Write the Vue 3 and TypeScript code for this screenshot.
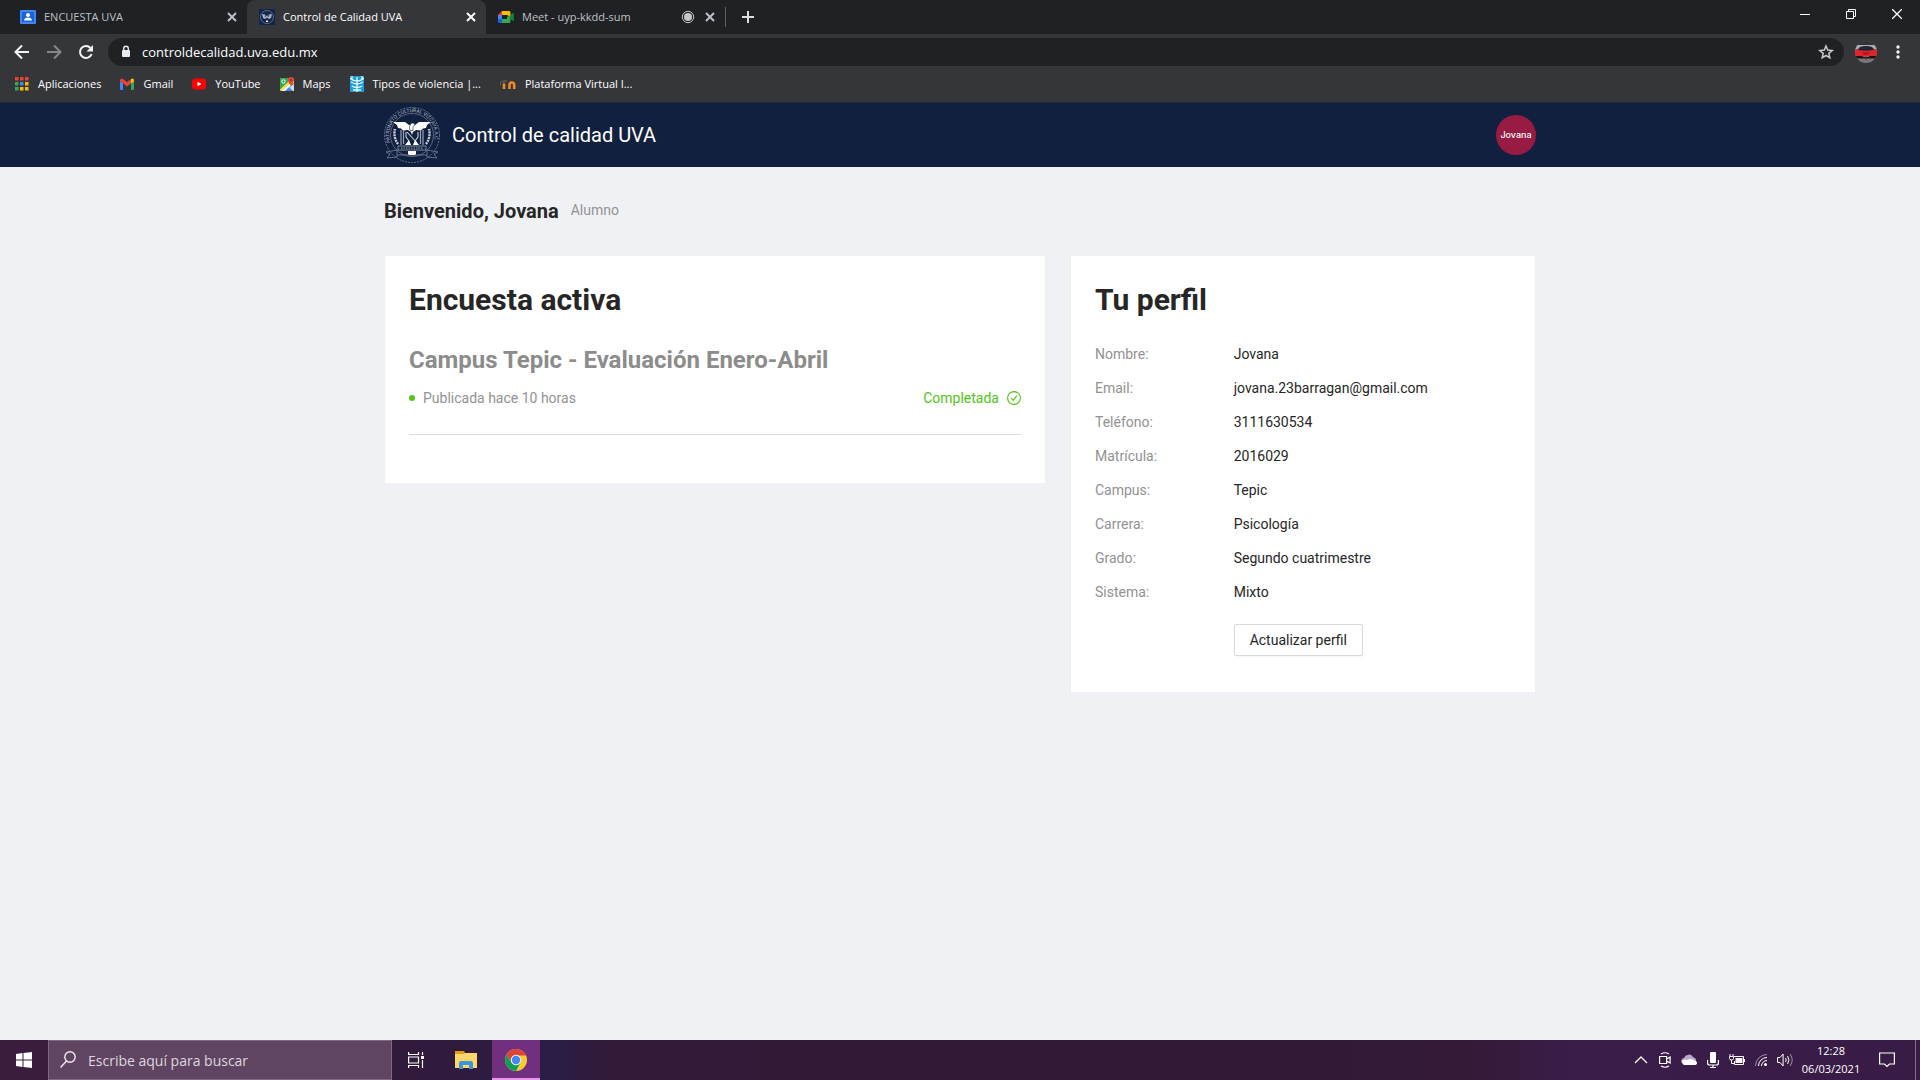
<script setup lang="ts">
import { ref } from 'vue'

interface ProfileField {
  label: string
  value: string
}

const address = ref('controldecalidad.uva.edu.mx')
const search = ref('')

const profile: ProfileField[] = [
  { label: 'Nombre', value: 'Jovana' },
  { label: 'Email', value: 'jovana.23barragan@gmail.com' },
  { label: 'Teléfono', value: '3111630534' },
  { label: 'Matrícula', value: '2016029' },
  { label: 'Campus', value: 'Tepic' },
  { label: 'Carrera', value: 'Psicología' },
  { label: 'Grado', value: 'Segundo cuatrimestre' },
  { label: 'Sistema', value: 'Mixto' },
]

const appColors: string[] = [
  '#ea4335', '#ea4335', '#ea4335',
  '#34a853', '#4285f4', '#fbbc04',
  '#34a853', '#fbbc04', '#fbbc04',
]
</script>

<template>
  <div class="desktop">
    <header class="browser">
      <div class="tab-strip">
        <div class="tab">
          <button class="tab-title" type="button">
            <svg width="16" height="16" viewBox="0 0 16 16" aria-hidden="true">
              <rect y="1" width="16" height="14" rx="1" fill="#4285f4" />
              <rect x="2" y="3" width="12" height="10" fill="#1a62d6" />
              <circle cx="8" cy="6" r="2" fill="#fff" />
              <path d="M4 11.500c0-2 2-3 4-3s4 1 4 3z" fill="#fff" />
            </svg>
            <span>ENCUESTA UVA</span>
          </button>
          <button class="tab-close" type="button" aria-label="Cerrar pestaña">
            <svg width="10" height="10" viewBox="0 0 10 10"><path d="M1 1l8 8M9 1l-8 8" /></svg>
          </button>
        </div>
        <div class="tab active">
          <button class="tab-title" type="button">
            <svg width="16" height="16" viewBox="0 0 16 16" aria-hidden="true">
              <rect width="16" height="16" fill="#14254a" />
              <circle cx="8" cy="8" r="6.500" fill="none" stroke="#6f7c98" stroke-width=".8" />
              <path d="M3 5l3 .5L8 7l2-1.500L13 5l-1 4-2 1-2-1.500L6 10 4 9z" fill="#aab4c6" />
              <circle cx="6.500" cy="7" r=".8" fill="#14254a" /><circle cx="9.500" cy="7" r=".8" fill="#14254a" />
              <path d="M7 11.500h2v1.500H7z" fill="#fff" />
            </svg>
            <span>Control de Calidad UVA</span>
          </button>
          <button class="tab-close" type="button" aria-label="Cerrar pestaña">
            <svg width="10" height="10" viewBox="0 0 10 10"><path d="M1 1l8 8M9 1l-8 8" /></svg>
          </button>
        </div>
        <div class="tab">
          <button class="tab-title" type="button">
            <svg width="16" height="16" viewBox="0 0 16 16" aria-hidden="true">
              <path d="M4 2v4H0z" fill="#ea4335" />
              <path d="M4 2h7q1.500 0 1.500 1.500V8L9 6H4z" fill="#fbbc04" />
              <path d="M0 6h4v4H0z" fill="#4285f4" />
              <path d="M0 10h4v4H1.500Q0 14 0 12.500z" fill="#1967d2" />
              <path d="M4 10h5V8l3.500-2v6.500q0 1.500-1.500 1.500H4z" fill="#34a853" />
              <path d="M12.500 6L15 4q.8-.5.8.4v7.200q0 .9-.8.4l-2.500-2z" fill="#188038" />
            </svg>
            <span>Meet - uyp-kkdd-sum</span>
          </button>
          <svg width="14" height="14" viewBox="0 0 14 14" aria-hidden="true">
            <circle cx="7" cy="7" r="4" fill="#c4c7ca" />
            <circle cx="7" cy="7" r="5.700" fill="none" stroke="#c4c7ca" />
          </svg>
          <button class="tab-close" type="button" aria-label="Cerrar pestaña">
            <svg width="10" height="10" viewBox="0 0 10 10"><path d="M1 1l8 8M9 1l-8 8" /></svg>
          </button>
        </div>
        <span class="tab-divider"></span>
        <button class="new-tab" type="button" aria-label="Nueva pestaña">
          <svg width="12" height="12" viewBox="0 0 12 12"><path d="M6 0v12M0 6h12" stroke="#dadce0" stroke-width="2" /></svg>
        </button>
        <div class="window-controls">
          <button type="button" aria-label="Minimizar">
            <svg width="10" height="10" viewBox="0 0 10 10"><path d="M0 5.500h10" /></svg>
          </button>
          <button type="button" aria-label="Restaurar">
            <svg width="10" height="10" viewBox="0 0 10 10"><path d="M.5 2.500h7v7h-7zM2.500 2.500v-2h7v7h-2" /></svg>
          </button>
          <button type="button" aria-label="Cerrar">
            <svg width="10" height="10" viewBox="0 0 10 10"><path d="M0 0l10 10M10 0L0 10" stroke-width="1.300" /></svg>
          </button>
        </div>
      </div>

      <div class="toolbar">
        <button class="nav-button" type="button" aria-label="Atrás">
          <svg width="16" height="16" viewBox="0 0 16 16"><path d="M15 8H2M8 1.500L1.500 8 8 14.500" fill="none" stroke="#f1f3f4" stroke-width="2" /></svg>
        </button>
        <button class="nav-button" type="button" aria-label="Adelante">
          <svg width="16" height="16" viewBox="0 0 16 16"><path d="M1 8h13M8 1.500L14.500 8 8 14.500" fill="none" stroke="#85878a" stroke-width="2" /></svg>
        </button>
        <button class="nav-button" type="button" aria-label="Recargar">
          <svg width="16" height="16" viewBox="0 0 16 16">
            <path d="M13.600 10.200A6 6 0 1 1 12.500 4" fill="none" stroke="#f1f3f4" stroke-width="2" />
            <path d="M15 1v6.500H8.500z" fill="#f1f3f4" />
          </svg>
        </button>
        <div class="omnibox">
          <svg width="12" height="14" viewBox="0 0 12 14" aria-hidden="true">
            <rect x="2" y="5" width="8" height="7" rx="1" fill="#e8eaed" />
            <path d="M3.700 5V3.500a2.300 2.300 0 0 1 4.600 0V5" fill="none" stroke="#e8eaed" stroke-width="1.400" />
          </svg>
          <input v-model="address" type="text" aria-label="Dirección" />
          <button class="star" type="button" aria-label="Agregar a favoritos">
            <svg width="16" height="16" viewBox="0 0 16 16">
              <path d="M8 2l1.700 4.100 4.500.4-3.400 2.900 1 4.400L8 11.500l-3.800 2.300 1-4.400-3.400-2.900 4.500-.4z" fill="none" stroke="#c9cbce" stroke-width="1.500" />
            </svg>
          </button>
        </div>
        <button class="nav-button" type="button" aria-label="Perfil">
          <svg width="22" height="22" viewBox="0 0 22 22">
            <defs><clipPath id="car-clip"><circle cx="11" cy="11" r="11" /></clipPath></defs>
            <g clip-path="url(#car-clip)">
              <rect width="22" height="22" fill="#77787a" />
              <rect width="22" height="5" fill="#333" />
              <rect y="4" width="22" height="4" fill="#a9abad" />
              <path d="M0 10l4-3q7-2.500 14 0l4 3v5H0z" fill="#e0242b" />
              <path d="M5 6q6-2 12 0l2 3q-8 1.500-16 0z" fill="#20263a" />
              <path d="M1 15h6l2 1h4l2-1h6v2.500H1z" fill="#2a1014" />
              <path d="M7 11.500h8l-2 2H9zM10.500 15h1v4h-1z" fill="#a3121a" />
            </g>
          </svg>
        </button>
        <button class="nav-button" type="button" aria-label="Menú">
          <svg width="16" height="16" viewBox="0 0 16 16" fill="#f1f3f4"><circle cx="8" cy="3" r="1.700" /><circle cx="8" cy="8" r="1.700" /><circle cx="8" cy="13" r="1.700" /></svg>
        </button>
      </div>

      <nav class="bookmarks" aria-label="Marcadores">
        <a href="#">
          <svg width="14" height="14" viewBox="0 0 14 14" aria-hidden="true">
            <rect v-for="(color, i) in appColors" :key="i" :x="(i % 3) * 5" :y="Math.floor(i / 3) * 5" width="3.500" height="3.500" :fill="color" />
          </svg>
          Aplicaciones
        </a>
        <a href="#">
          <svg width="14" height="14" viewBox="0 0 14 14" aria-hidden="true">
            <path d="M0 4l3 2.300V13H1q-1 0-1-1z" fill="#4285f4" />
            <path d="M14 4l-3 2.300V13h2q1 0 1-1z" fill="#34a853" />
            <path d="M0 3q.8-2.500 3-1l4 3.200L11 2v4.300L7 9.500 3 6.300 0 4z" fill="#ea4335" />
            <path d="M11 2q2.500-1.500 3 1v1.500l-3 2z" fill="#fbbc04" />
          </svg>
          Gmail
        </a>
        <a href="#">
          <svg width="14" height="14" viewBox="0 0 14 14" aria-hidden="true">
            <rect y="1.500" width="14" height="11" rx="3" fill="#f00" />
            <path d="M5.500 4.700L9.500 7l-4 2.300z" fill="#fff" />
          </svg>
          YouTube
        </a>
        <a href="#">
          <svg width="14" height="14" viewBox="0 0 14 14" aria-hidden="true">
            <path d="M0 1h14v13H0z" fill="#34a853" />
            <path d="M0 12.500L11.500 2l2.500 3.500L5 14H1z" fill="#fbdc60" />
            <path d="M7.500 9l5.500 5H3z" fill="#4285f4" />
            <path d="M2 14L14 3v2.500L5 14z" fill="#f1f3f4" />
            <path d="M14 7v7h-1L9.500 10.500z" fill="#dadce0" />
            <circle cx="3.500" cy="4.500" r="1.700" fill="none" stroke="#fff" />
            <path d="M11 9Q8 5.500 8 3a3 3 0 0 1 6 0q0 2.500-3 6z" fill="#ea4335" />
            <circle cx="11" cy="3" r="1" fill="#8c1d18" />
          </svg>
          Maps
        </a>
        <a href="#">
          <svg width="14" height="16" viewBox="0 0 14 16" aria-hidden="true">
            <path d="M0 0h14v16H0z" fill="#1ba0dc" />
            <path d="M7 1v15M0 2q3 3 7 3t7-3M1 6q3 2 6 2t6-2M2 10q2 1.500 5 1.500T12 10M3 14h8M2 0v3M12 0v3" fill="none" stroke="#e8f7ff" stroke-width="1.300" />
          </svg>
          Tipos de violencia |...
        </a>
        <a href="#">
          <svg width="16" height="14" viewBox="0 0 16 14" aria-hidden="true">
            <path d="M0 5l5-2.500L8 4 4 6z" fill="#5a5148" />
            <path d="M.5 5v3.500" stroke="#6f5a45" />
            <path d="M4 12V6.500M9.500 12V8q0-2.500 2.300-2.500T14.200 8v4" fill="none" stroke="#f08a2a" stroke-width="2.600" />
          </svg>
          Plataforma Virtual I...
        </a>
      </nav>
    </header>

    <div class="site">
      <header class="site-header">
        <div class="container header-row">
          <a class="brand" href="#">
            <svg width="56" height="56" viewBox="0 0 56 56" aria-hidden="true">
              <defs><path id="crest-arc" d="M6.500 35.500A22.800 22.800 0 1 1 49.500 35.500" /></defs>
              <circle cx="28" cy="28" r="27.500" fill="none" stroke="#77839c" stroke-width=".8" stroke-dasharray="2 1" />
              <circle cx="28" cy="28" r="21.500" fill="none" stroke="#77839c" stroke-width=".7" />
              <text class="crest-text"><textPath href="#crest-arc">PATRONATO CULTURAL VIZCAYA A.C.</textPath></text>
              <path d="M14 37a17.500 17.500 0 0 1-3-15M42 37a17.500 17.500 0 0 0 3-15" fill="none" stroke="#c6cddb" stroke-width="2.400" stroke-dasharray="2 .8" />
              <path d="M9 15h12l4 3h6l4-3h12l-4 3-1 3-3 .5-2 2-5-.5-3 2-1 3-1-3-3-2-5 .5-2-2-3-.5-1-3z" fill="#fff" />
              <path d="M25.500 20q.5-4 3-4 2.500 0 2.500 2l-2 1.500v4h-3z" fill="#fff" stroke="#12203f" stroke-width=".6" />
              <path d="M17 23v15M19.500 23v14M36.500 23v14M39 23v15" stroke="#98a3b8" stroke-width="1.200" />
              <path d="M22 25v5l3 4M34 25v5l-3 4M23 25l10 11" fill="none" stroke="#c6cddb" stroke-width="1.100" />
              <path d="M25 33l-4 5h6zM31 33l4 5h-6z" fill="#fff" />
              <path d="M14 39h28v4H14z" fill="#12203f" stroke="#98a3b8" stroke-width=".8" />
              <path d="M17 41h22" stroke="#98a3b8" stroke-dasharray="1.500 1" />
              <path d="M2 45l11-2v5h30v-5l11 2-4 2 3 4-10-1v-2M2 45l4 2-3 4 10-1v-2" fill="none" stroke="#77839c" stroke-width=".8" />
              <path d="M24 44h8v3l-1 1h-6l-1-1z" fill="#fff" />
            </svg>
            <span>Control de calidad UVA</span>
          </a>
          <button class="avatar" type="button">Jovana</button>
        </div>
      </header>

      <main class="container content">
        <div class="welcome">
          <h1>Bienvenido, Jovana</h1>
          <span>Alumno</span>
        </div>

        <div class="columns">
          <section class="card">
            <h2>Encuesta activa</h2>
            <article class="survey">
              <h3>Campus Tepic - Evaluación Enero-Abril</h3>
              <div class="survey-meta">
                <span class="published">Publicada hace 10 horas</span>
                <span class="completed">
                  Completada
                  <svg width="14" height="14" viewBox="0 0 14 14" aria-hidden="true">
                    <circle cx="7" cy="7" r="6.400" fill="none" stroke="currentColor" stroke-width="1.100" />
                    <path d="M4.200 7.200l2 2.200 3.700-4.700" fill="none" stroke="currentColor" stroke-width="1.200" />
                  </svg>
                </span>
              </div>
            </article>
          </section>

          <section class="card">
            <h2>Tu perfil</h2>
            <dl>
              <div v-for="field in profile" :key="field.label" class="field">
                <dt>{{ field.label }}:</dt>
                <dd>{{ field.value }}</dd>
              </div>
            </dl>
            <div class="field actions">
              <span></span>
              <div><button class="update" type="button">Actualizar perfil</button></div>
            </div>
          </section>
        </div>
      </main>
    </div>

    <footer class="taskbar">
      <button class="task" type="button" aria-label="Inicio">
        <svg width="16" height="16" viewBox="0 0 16 16" fill="#fff"><path d="M0 2l6.500-1v6.500H0zM7.500 1L16 0v7.500H7.500zM0 8.500h6.500V15L0 14zM7.500 8.500H16V16l-8.500-1z" /></svg>
      </button>
      <label class="search">
        <svg width="16" height="18" viewBox="0 0 16 18" fill="none" stroke="#f2ecf3" stroke-width="1.400" aria-hidden="true">
          <circle cx="10" cy="6" r="5.200" /><path d="M6.500 10L.5 16.500" />
        </svg>
        <input v-model="search" type="text" placeholder="Escribe aquí para buscar" aria-label="Buscar" />
      </label>
      <div class="tasks">
        <button class="task" type="button" aria-label="Vista de tareas">
          <svg width="16" height="16" viewBox="0 0 16 16" fill="none" stroke="#fff" stroke-width="1.200">
            <path d="M.6 0v2.500h9.900V0M.6 16v-2.500h9.900V16M.6 5h9.900v6H.6zM14.500 0v3M14.500 8v8" /><path d="M13 4h3v3h-3z" fill="#fff" stroke="none" />
          </svg>
        </button>
        <button class="task" type="button" aria-label="Explorador de archivos">
          <svg width="22" height="18" viewBox="0 0 22 18">
            <path d="M0 0h9l1 2h11v5H0z" fill="#e3a008" />
            <path d="M0 3h8l2-1h12v15H0z" fill="#ffd766" />
            <path d="M4 18v-6q0-2 2-2h10q2 0 2 2v6h-4v-4H8v4z" fill="#3a96dd" />
          </svg>
        </button>
        <button class="task running" type="button" aria-label="Google Chrome">
          <svg width="22" height="22" viewBox="0 0 22 22">
            <circle cx="11" cy="11" r="11" fill="#fbc934" />
            <path d="M1.500 5.500A11 11 0 0 0 11 22l4.500-8.500L6.500 13.500z" fill="#0f9d58" />
            <path d="M1.500 5.500A11 11 0 0 1 20.500 5.500L21 6.500H11L6.700 13.500z" fill="#db4437" />
            <circle cx="11" cy="11" r="5.200" fill="#f1f1f1" />
            <circle cx="11" cy="11" r="4.200" fill="#4285f4" />
          </svg>
        </button>
      </div>

      <div class="tray">
        <button type="button" aria-label="Mostrar iconos ocultos">
          <svg width="14" height="8" viewBox="0 0 14 8"><path d="M1 7l6-6 6 6" fill="none" stroke="#fff" stroke-width="1.300" /></svg>
        </button>
        <button type="button" aria-label="Reunirse ahora">
          <svg width="12" height="16" viewBox="0 0 12 16" fill="none" stroke="#fff" stroke-width="1.200"><path d="M.6 4.500h7v7h-7zM7.600 7l3.500-2v6l-3.500-2M2 2q4-2.500 8 0M2 14q4 2.500 8 0" /></svg>
        </button>
        <button type="button" aria-label="OneDrive">
          <svg width="16" height="12" viewBox="0 0 16 12"><path d="M1 9a3 3 0 0 1 2-5 5 5 0 0 1 9-1 4 4 0 0 1 3 5z" fill="#b9a9c4" /><path d="M3 11a3 3 0 0 1-1-5q2-1 4 0 5-2 7 .5 3 .5 3 2.500t-3 2z" fill="#fff" /></svg>
        </button>
        <button type="button" aria-label="Micrófono">
          <svg width="12" height="16" viewBox="0 0 12 16" fill="none" stroke="#fff"><rect x="3" y="0" width="6" height="11" rx="1" fill="#fff" stroke="none" /><path d="M.6 8v3q0 2 2 2h6.800q2 0 2-2V8M6 13v2.500M3 15.500h6" stroke-width="1.200" /></svg>
        </button>
        <button type="button" aria-label="Batería">
          <svg width="16" height="12" viewBox="0 0 16 12" fill="none" stroke="#fff"><path d="M5 2.500h9.500v8h-9V7M15.500 5v3M1 0v2M4 0v2M.5 2.500h4v2q0 1.500-2 1.500t-2-1.500zM2.500 6v3.500h3" /><path d="M6.500 4h7v5h-7z" fill="#fff" stroke="none" /></svg>
        </button>
        <button type="button" aria-label="Red">
          <svg width="12" height="12" viewBox="0 0 12 12" fill="none" stroke="#fff"><path d="M.5 12A11.500 11.500 0 0 1 12 .5" opacity=".5" /><path d="M3.500 12A8.500 8.500 0 0 1 12 3.500M6.500 12A5.500 5.500 0 0 1 12 6.500" /><circle cx="10.500" cy="10.500" r="1.500" fill="#fff" stroke="none" /></svg>
        </button>
        <button type="button" aria-label="Volumen">
          <svg width="16" height="14" viewBox="0 0 16 14" fill="none" stroke="#fff"><path d="M.6 4.500h2.500l3-3.500v12l-3-3.500H.6zM8.500 5q1.500 2 0 4M10.500 3q3 4 0 8" /><path d="M13 1q4.500 6 0 12" opacity=".5" /></svg>
        </button>
        <button class="clock" type="button">
          <span>12:28</span>
          <span>06/03/2021</span>
        </button>
        <button class="notifications" type="button" aria-label="Notificaciones">
          <svg width="16" height="16" viewBox="0 0 16 16"><path d="M.6 1h14.800v11H10.500L8 14.500 5.500 12H.6z" fill="none" stroke="#fff" stroke-width="1.200" /></svg>
        </button>
        <span class="show-desktop"></span>
      </div>
    </footer>
  </div>
</template>

<style>
body {
  margin: 0;
  background: #f0f1f5;
}
</style>

<style scoped>
.desktop {
  display: flex;
  flex-direction: column;
  min-height: 100vh;
  font-family: "Open Sans", "Noto Sans", sans-serif;
}

button {
  display: flex;
  align-items: center;
  justify-content: center;
  padding: 0;
  border: 0;
  background: none;
  color: inherit;
  font: inherit;
}

input {
  padding: 0;
  border: 0;
  outline: 0;
  background: none;
  color: inherit;
  font: inherit;
}

a {
  color: inherit;
  text-decoration: none;
}

svg {
  flex: none;
}

/* Browser window */
.browser {
  background: #35363a;
  border-bottom: 1px solid #292a2c;
  color: #fff;
}

.tab-strip {
  display: flex;
  height: 34px;
  padding-left: 8px;
  background: #202124;
}

.tab {
  display: flex;
  align-items: center;
  gap: 10px;
  box-sizing: border-box;
  width: 239px;
  height: 34px;
  padding: 0 10px 0 12px;
  overflow: hidden;
  color: #bdc1c6;
  font-size: 11px;
  line-height: 16px;
}

.tab.active {
  border-radius: 8px 8px 0 0;
  background: #35363a;
  color: #fff;
}

.tab-title {
  flex: 1;
  justify-content: flex-start;
  gap: 8px;
  white-space: nowrap;
}

.tab-close {
  width: 10px;
  height: 16px;
}

.tab-close svg {
  fill: none;
  stroke: currentColor;
  stroke-width: 2;
}

.tab-divider {
  width: 1px;
  height: 20px;
  margin-top: 7px;
  background: #5f6165;
}

.new-tab {
  width: 44px;
}

.window-controls {
  display: flex;
  height: 28px;
  margin-left: auto;
}

.window-controls button {
  width: 46px;
}

.window-controls svg {
  fill: none;
  stroke: #fff;
}

.toolbar {
  display: flex;
  align-items: center;
  height: 36px;
  padding: 0 6px;
}

.nav-button {
  width: 32px;
  height: 28px;
}

.omnibox {
  display: flex;
  flex: 1;
  align-items: center;
  gap: 10px;
  height: 28px;
  margin: 0 6px;
  padding: 0 10px 0 12px;
  border-radius: 14px;
  background: #202124;
  font-size: 13px;
}

.omnibox input {
  flex: 1;
  min-width: 0;
}

.bookmarks {
  display: flex;
  align-items: center;
  gap: 19px;
  height: 28px;
  padding: 0 0 4px 15px;
  font-size: 11px;
  line-height: 16px;
}

.bookmarks a {
  display: flex;
  align-items: center;
  gap: 9px;
  white-space: nowrap;
}

/* Survey site */
.site {
  flex: 1;
  background: #f0f1f5;
  color: #262626;
  font-family: Roboto, sans-serif;
  font-size: 14px;
  line-height: 22px;
}

.container {
  max-width: 1152px;
  margin: 0 auto;
}

.site-header {
  background: #12203f;
  color: #fff;
}

.header-row {
  display: flex;
  align-items: center;
  justify-content: space-between;
  height: 64px;
}

.brand {
  display: flex;
  align-items: center;
  gap: 12px;
  font-size: 20px;
}

.crest-text {
  fill: #b5bece;
  font-size: 5px;
}

.avatar {
  width: 40px;
  height: 40px;
  border-radius: 50%;
  background: #981b43;
  font-family: Inter, sans-serif;
  font-size: 9px;
  font-weight: 500;
}

.content {
  padding: 32px 0;
}

.welcome {
  display: flex;
  align-items: flex-start;
  gap: 12px;
  margin-bottom: 32px;
}

.welcome span {
  color: #929395;
}

h1,
h2,
h3,
dl,
dd {
  margin: 0;
}

h1 {
  font-size: 20px;
  font-weight: 700;
  line-height: 24px;
}

h2 {
  margin-bottom: 24px;
  font-size: 30px;
  font-weight: 700;
  line-height: 39px;
}

h3 {
  margin-bottom: 10px;
  color: #8c8c8c;
  font-size: 24px;
  font-weight: 700;
  line-height: 34px;
}

.columns {
  display: grid;
  grid-template-columns: 7fr 5fr;
  align-items: start;
  margin: 0 -12px;
}

.card {
  margin: 0 12px;
  padding: 24px;
  border: 1px solid #eff0f1;
  background: #fff;
}

.survey {
  margin-bottom: 24px;
  padding-bottom: 25px;
  border-bottom: 1px solid #dcdcdc;
}

.survey-meta {
  display: flex;
  align-items: center;
  justify-content: space-between;
}

.published {
  display: flex;
  align-items: center;
  gap: 8px;
  color: #929292;
}

.published::before {
  width: 6px;
  height: 6px;
  border-radius: 50%;
  background: #52c41a;
  content: "";
}

.completed {
  display: flex;
  align-items: center;
  gap: 8px;
  color: #52c41a;
}

.field {
  display: grid;
  grid-template-columns: 1fr 2fr;
  margin-bottom: 12px;
}

dt {
  color: #929292;
}

.actions {
  margin: 21px 0 12px;
}

.update {
  height: 32px;
  padding: 0 15px;
  border: 1px solid #d9d9d9;
  border-radius: 2px;
  background: #fff;
  box-shadow: 0 2px 0 rgba(0, 0, 0, 0.02);
}

/* Windows taskbar */
.taskbar {
  display: flex;
  height: 40px;
  background: linear-gradient(90deg, #3a1c3c 0%, #311a3c 22%, #2b1d45 29%, #321a38 32%, #321a34 70%, #341a36 76%, #3a1d49 82%, #381c45 100%);
  color: #fff;
}

.tasks {
  display: flex;
  gap: 2px;
}

.task {
  width: 48px;
}

.running {
  box-shadow: inset 0 -2px #e795ee;
  background: #71307f;
}

.search {
  display: flex;
  align-items: center;
  gap: 12px;
  box-sizing: border-box;
  width: 344px;
  padding: 0 11px;
  border: 1px solid #806883;
  background: #5f4562;
  font-size: 14px;
}

.search input {
  flex: 1;
  min-width: 0;
}

.search input::placeholder {
  color: #ded6df;
  opacity: 1;
}

.tray {
  display: flex;
  margin-left: auto;
}

.tray button {
  width: 24px;
}

.tray .clock {
  flex-direction: column;
  width: 68px;
  font-size: 11px;
  line-height: 18px;
}

.tray .notifications {
  width: 44px;
}

.show-desktop {
  width: 4px;
  margin-left: 6px;
  border-left: 1px solid #806f88;
}
</style>
